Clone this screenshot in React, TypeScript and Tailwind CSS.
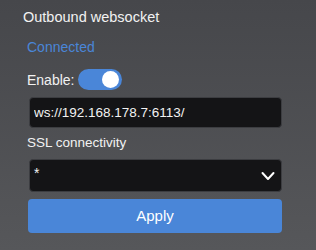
import React from 'react';

export default function App() {
  return (
    <div
      className="w-[316px] h-[250px] overflow-hidden bg-gradient-to-b from-[#46474b] to-[#56575a] text-[#f2f2f2] text-[14px] leading-[20px]"
      style={{ fontFamily: '"Liberation Sans", Arial, sans-serif' }}
    >
      <div className="pt-[7px] pl-[27px] w-[282px]">
        {/* Header */}
        <div className="-ml-[4px] h-[20px] text-[14.5px]">Outbound websocket</div>

        <div className="mt-[10px] h-[20px] text-[#4a86d8]">Connected</div>

        {/* Enable toggle */}
        <div className="mt-[12px] h-[21px] flex items-center gap-[4px]">
          <span>Enable:</span>
          <button className="relative w-[44px] h-[21px] rounded-full bg-[#4a86d8]">
            <span className="absolute right-[3px] top-[2px] w-[17px] h-[17px] rounded-full bg-white" />
          </button>
        </div>

        {/* URL input */}
        <input
          readOnly
          value="ws://192.168.178.7:6113/"
          className="mt-[7px] ml-[2px] block w-[253px] h-[31px] px-[4px] rounded-[4px] bg-[#141416] border border-[#3c3d41] text-[#f2f2f2] text-[13.5px] outline-none"
          style={{ fontFamily: '"Liberation Sans", Arial, sans-serif' }}
        />

        <div className="mt-[5px] h-[20px] text-[13.5px]">SSL connectivity</div>

        {/* Select */}
        <div className="mt-[6px] ml-[2px] w-[253px] h-[33px] rounded-[4px] bg-[#141416] border border-[#3c3d41] flex items-center justify-between pl-[4px] pr-[6px]">
          <span className="text-[14px] -mt-[6px]">*</span>
          <svg width="14" height="10" viewBox="0 0 14 10" fill="none">
            <path d="M1.5 2 L7 8 L12.5 2" stroke="white" strokeWidth="2" strokeLinecap="round" strokeLinejoin="round" />
          </svg>
        </div>

        {/* Apply */}
        <button className="mt-[7px] ml-[1px] block w-[254px] h-[34px] rounded-[4px] bg-[#4a86d8] text-white text-[15px]">
          Apply
        </button>
      </div>
    </div>
  );
}
